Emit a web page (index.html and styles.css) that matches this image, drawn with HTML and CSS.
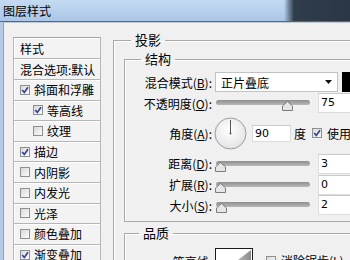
FILE: index.html
```html
<!DOCTYPE html>
<html lang="zh-CN">
<head>
    <meta charset="UTF-8">
    <title>图层样式</title>
    <link rel="stylesheet" href="styles.css">
</head>
<body>

<div class="window">
    <!-- Title bar -->
    <div class="titlebar"><span class="title">图层样式</span></div>

    <div class="frame">
        <!-- Left style list -->
        <div class="sidebar">
            <ul class="style-list">
                <li class="head first">样式</li>
                <li class="head">混合选项:默认</li>
                <li><span class="cb on"><svg viewBox="0 0 8 8"><polyline points="1.2,4 3.3,6.4 7,1.2"/></svg></span>斜面和浮雕</li>
                <li class="sub"><span class="cb on"><svg viewBox="0 0 8 8"><polyline points="1.2,4 3.3,6.4 7,1.2"/></svg></span>等高线</li>
                <li class="sub"><span class="cb"></span>纹理</li>
                <li><span class="cb on"><svg viewBox="0 0 8 8"><polyline points="1.2,4 3.3,6.4 7,1.2"/></svg></span>描边</li>
                <li><span class="cb"></span>内阴影</li>
                <li><span class="cb"></span>内发光</li>
                <li><span class="cb"></span>光泽</li>
                <li><span class="cb"></span>颜色叠加</li>
                <li><span class="cb on"><svg viewBox="0 0 8 8"><polyline points="1.2,4 3.3,6.4 7,1.2"/></svg></span>渐变叠加</li>
            </ul>
        </div>

        <!-- Drop shadow settings -->
        <div class="panel">
            <fieldset class="group outer">
                <legend>投影</legend>

                <fieldset class="group inner">
                    <legend>结构</legend>

                    <div class="row r-mode">
                        <span class="label">混合模式(<u>B</u>):</span>
                        <div class="select">
                            <span>正片叠底</span>
                            <svg class="arrow" viewBox="0 0 7 4"><polygon points="0,0 7,0 3.5,4"/></svg>
                        </div>
                        <span class="swatch"></span>
                    </div>

                    <div class="row r-opacity">
                        <span class="label">不透明度(<u>O</u>):</span>
                        <div class="slider">
                            <div class="track"></div>
                            <svg class="thumb" style="left: 67px" viewBox="0 0 11 10"><polygon points="5.5,0.5 10.5,5 10.5,9.5 0.5,9.5 0.5,5"/></svg>
                        </div>
                        <span class="num">75</span>
                    </div>

                    <div class="row r-angle">
                        <span class="label">角度(<u>A</u>):</span>
                        <svg class="dial" viewBox="0 0 33 33">
                            <defs>
                                <radialGradient id="dialFill" cx="45%" cy="40%" r="65%">
                                    <stop offset="0" stop-color="#ffffff"/>
                                    <stop offset="1" stop-color="#e2e2e2"/>
                                </radialGradient>
                            </defs>
                            <circle cx="16.5" cy="16.5" r="15.5" fill="url(#dialFill)" stroke="#9b9b9b"/>
                            <line x1="16.5" y1="16.5" x2="16.5" y2="3" stroke="#555" stroke-width="1"/>
                            <circle cx="16.5" cy="16.5" r="1" fill="#555"/>
                        </svg>
                        <span class="num angle">90</span>
                        <span class="unit">度</span>
                        <span class="cb on"><svg viewBox="0 0 8 8"><polyline points="1.2,4 3.3,6.4 7,1.2"/></svg></span>
                        <span class="check-label">使用全局光(<u>G</u>)</span>
                    </div>

                    <div class="row r-distance">
                        <span class="label">距离(<u>D</u>):</span>
                        <div class="slider">
                            <div class="track"></div>
                            <svg class="thumb" style="left: 0px" viewBox="0 0 11 10"><polygon points="5.5,0.5 10.5,5 10.5,9.5 0.5,9.5 0.5,5"/></svg>
                        </div>
                        <span class="num">3</span>
                    </div>

                    <div class="row r-spread">
                        <span class="label">扩展(<u>R</u>):</span>
                        <div class="slider">
                            <div class="track"></div>
                            <svg class="thumb" style="left: 0px" viewBox="0 0 11 10"><polygon points="5.5,0.5 10.5,5 10.5,9.5 0.5,9.5 0.5,5"/></svg>
                        </div>
                        <span class="num">0</span>
                    </div>

                    <div class="row r-size">
                        <span class="label">大小(<u>S</u>):</span>
                        <div class="slider">
                            <div class="track"></div>
                            <svg class="thumb" style="left: 1px" viewBox="0 0 11 10"><polygon points="5.5,0.5 10.5,5 10.5,9.5 0.5,9.5 0.5,5"/></svg>
                        </div>
                        <span class="num">2</span>
                    </div>
                </fieldset>

                <fieldset class="group inner quality">
                    <legend>品质</legend>

                    <div class="row r-contour">
                        <span class="label">等高线:</span>
                        <svg class="contour" viewBox="0 0 38 30">
                            <defs>
                                <linearGradient id="contourFill" x1="0" y1="0" x2="1" y2="0">
                                    <stop offset="0" stop-color="#ffffff"/>
                                    <stop offset="1" stop-color="#8a8a8a"/>
                                </linearGradient>
                            </defs>
                            <rect x="0.5" y="0.5" width="37" height="29" fill="#fff" stroke="#1a1a1a"/>
                            <polygon points="2,28 36,2 36,28" fill="url(#contourFill)"/>
                        </svg>
                        <span class="cb"></span>
                        <span class="check-label">消除锯齿(<u>L</u>)</span>
                    </div>
                </fieldset>
            </fieldset>
        </div>
    </div>
</div>

</body>
</html>
```

FILE: styles.css
```css
* {
    box-sizing: border-box;
}
body {
    margin: 0;
    font-family: "Noto Sans CJK SC", "Liberation Sans", sans-serif;
    font-size: 12px;
    color: #000;
    background: #f0f0f0;
}
.window {
    width: 350px;
    height: 260px;
    overflow: hidden;
    display: flex;
    flex-direction: column;
    background: #f0f0f0;
}

/* Title bar */
.titlebar {
    height: 22px;
    flex-shrink: 0;
    display: flex;
    align-items: center;
    padding: 1px 0 0 3px;
    border-bottom: 1px solid #5d6874;
    background:
        linear-gradient(to right, transparent 0, transparent 284px, #7d93ab 288px, #2f3c4a 294px, #2b3745 100%),
        linear-gradient(#c4daf1, #aac6e7);
}
.title {
    font-size: 12px;
    line-height: 16px;
}

/* Body frame */
.frame {
    flex: 1;
    display: flex;
    border-left: 3px solid #b3cbe7;
}
.frame > .sidebar {
    border-left: 1px solid #9aa2ab;
    border-top: 1px solid #c3c8ce;
}
.frame > .panel {
    border-top: 1px solid #c3c8ce;
}

/* Style list */
.sidebar {
    flex-shrink: 0;
    padding: 14px 0 0 9px;
}
.style-list {
    width: 88px;
    margin: 0;
    padding: 0;
    list-style: none;
}
.style-list li {
    height: 20.6px;
    display: flex;
    align-items: center;
    gap: 4px;
    padding-left: 6px;
    white-space: nowrap;
    background: #f3f3f3;
    border: 1px solid #b6b6b6;
    border-top: none;
    box-shadow: inset 1px 1px 0 #fff;
}
.style-list li.head {
    height: 21px;
}
.style-list li.first {
    height: 22px;
    border-top: 1px solid #a3a3a3;
}
.style-list li.sub {
    padding-left: 19px;
}

/* Checkbox */
.cb {
    width: 10px;
    height: 10px;
    flex-shrink: 0;
    display: inline-flex;
    align-items: center;
    justify-content: center;
    border: 1px solid #8e8f8f;
    background: linear-gradient(135deg, #d9d9d9, #fbfbfb);
}
.cb svg {
    width: 8px;
    height: 8px;
}
.cb polyline {
    fill: none;
    stroke: #34449a;
    stroke-width: 1.7;
}

/* Right panel */
.panel {
    flex: 1;
    padding: 9px 0 0 12px;
}
.group {
    margin: 0;
    padding: 0;
    min-width: 0;
    border: 1px solid #a9a9a9;
    box-shadow: inset 1px 1px 0 #fff;
}
.group legend {
    padding: 0 4px;
    font-size: 13px;
    line-height: 16px;
}
.outer {
    width: 260px;
    padding-top: 3px;
}
.outer > legend {
    margin-left: 17px;
}
.inner {
    width: 240px;
    margin-left: 10px;
    padding: 5px 0 6px 0;
}
.inner > legend {
    margin-left: 16px;
}
.quality {
    margin-top: 3px;
    padding-top: 7px;
}
.quality > legend {
    margin-left: 14px;
}

/* Rows */
.row {
    display: flex;
    align-items: center;
    height: 20px;
}
.label {
    width: 90px;
    flex-shrink: 0;
    padding-right: 3px;
    text-align: right;
    white-space: nowrap;
}
.r-opacity {
    margin-top: 1px;
}
.r-angle {
    height: 34px;
    margin-top: 3px;
}
.r-distance {
    height: 21px;
    margin-top: 3px;
}
.r-spread {
    height: 21px;
}

/* Select and swatch */
.select {
    width: 123px;
    height: 20px;
    display: flex;
    align-items: center;
    justify-content: space-between;
    padding: 0 5px 0 5px;
    background: #fff;
    border: 1px solid #c2c2c2;
}
.arrow {
    width: 7px;
    height: 4px;
    fill: #111;
}
.swatch {
    width: 20px;
    height: 20px;
    margin-left: 4px;
    flex-shrink: 0;
    background: #000;
}

/* Slider */
.slider {
    position: relative;
    width: 96px;
    height: 20px;
    flex-shrink: 0;
}
.track {
    width: 94px;
    height: 5px;
    margin: 7px 0 0 1px;
    border-radius: 3px;
    background: linear-gradient(#8e8e8e, #b9b9b9);
}
.thumb {
    position: absolute;
    top: 8px;
    width: 11px;
    height: 10px;
}
.thumb polygon {
    fill: #e6e6e6;
    stroke: #7c7c7c;
}

/* Number fields */
.num {
    width: 40px;
    height: 20px;
    margin-left: 7px;
    flex-shrink: 0;
    padding-left: 2px;
    line-height: 18px;
    font-family: "DejaVu Sans", "Liberation Sans", sans-serif;
    font-size: 11px;
    background: #fff;
    border: 1px solid #dcdcdc;
    border-top-color: #c9c9c9;
}
.num.angle {
    width: 39px;
    height: 17px;
    margin-left: 5px;
    line-height: 15px;
}

/* Angle row */
.dial {
    width: 33px;
    height: 33px;
    flex-shrink: 0;
    margin-left: -1px;
}
.unit {
    margin-left: 3px;
    width: 12px;
}
.r-angle .cb {
    margin-left: 6px;
}
.check-label {
    margin-left: 5px;
    white-space: nowrap;
}

/* Quality */
.r-contour {
    height: 30px;
    align-items: flex-start;
}
.r-contour .label {
    padding-top: 5px;
}
.contour {
    width: 38px;
    height: 30px;
    flex-shrink: 0;
}
.r-contour .cb {
    margin: 8px 0 0 13px;
}
.r-contour .check-label {
    margin-top: 4px;
}
```
